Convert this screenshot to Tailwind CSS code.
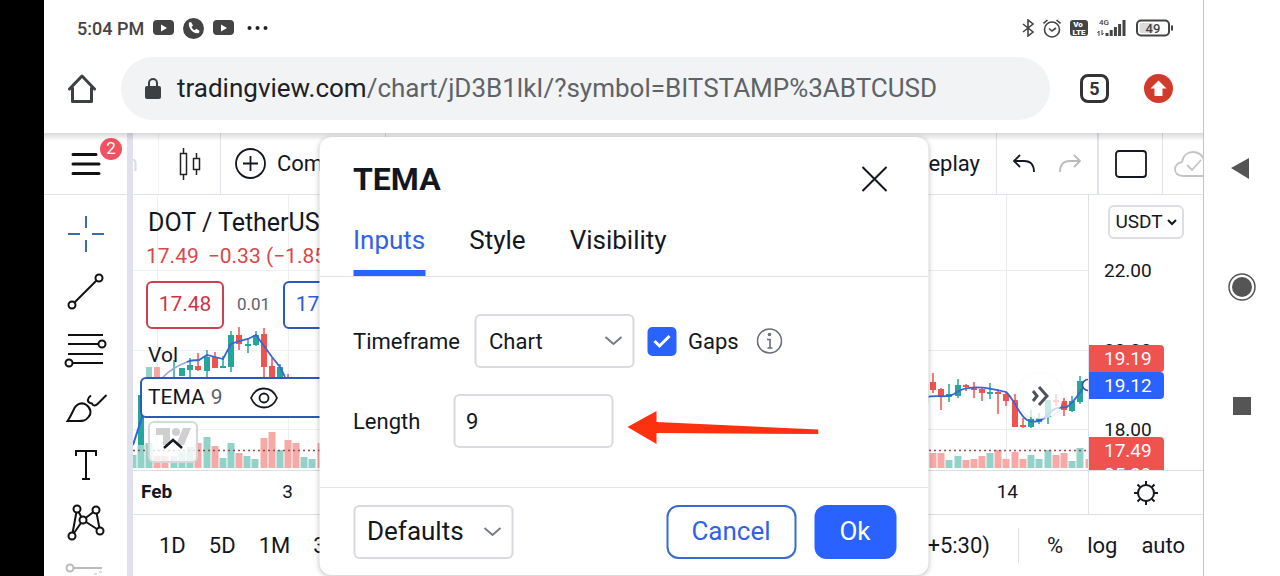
<!DOCTYPE html>
<html lang="en">
<head>
  <meta charset="UTF-8">
  <meta name="viewport" content="width=device-width, initial-scale=1.0">
  <title>TradingView</title>
  <script src="https://cdn.jsdelivr.net/npm/@tailwindcss/browser@4"></script>
</head>
<body class="bg-white text-[#131722] font-['Roboto','Liberation_Sans',sans-serif]">
<div class="flex h-screen w-full overflow-hidden">

  <!-- Camera cutout side -->
  <div class="w-11 shrink-0 bg-black"></div>

  <div class="flex flex-col flex-1 min-w-0">

    <!-- Status bar -->
    <div class="flex items-center justify-between h-14 shrink-0 pl-[33px] pr-[29px] text-[#444]">
      <div class="flex items-center gap-[9px]">
        <span class="text-[18px] font-medium">5:04 PM</span>
        <svg class="w-[21px] h-4" viewBox="0 0 21 16"><rect width="21" height="15" rx="4" fill="#444"/><path d="M8 4.500l6 3.500-6 3.500z" fill="#fff"/></svg>
        <svg class="w-[21px] h-[21px]" viewBox="0 0 21 21"><circle cx="10.500" cy="10.500" r="10.500" fill="#444"/><path d="M6 4.500l2-.5 2 3.500-1.500 1.500c.8 1.600 1.700 2.500 3.200 3.300l1.500-1.500 3.300 2-.5 2.200c-5 2-11.500-5-10-10.500z" fill="#fff"/></svg>
        <svg class="w-[21px] h-4" viewBox="0 0 21 16"><rect width="21" height="15" rx="4" fill="#444"/><path d="M8 4.500l6 3.500-6 3.500z" fill="#fff"/></svg>
        <svg class="w-6 h-4 ml-1" viewBox="0 0 24 16" fill="#222"><circle cx="2.500" cy="8" r="2"/><circle cx="10.500" cy="8" r="2"/><circle cx="18.500" cy="8" r="2"/></svg>
      </div>
      <div class="flex items-center gap-[9px]">
        <svg class="w-3 h-[18px]" viewBox="0 0 12 18" fill="none" stroke="#444" stroke-width="1.600"><path d="M1 5l10 8-5 4V1l5 4-10 8"/></svg>
        <svg class="w-[18px] h-[19px]" viewBox="0 0 18 19" fill="none" stroke="#444" stroke-width="1.600"><circle cx="9" cy="10.500" r="7.500"/><path d="M6 9.500l3 2.500 4-3M.5 4.500L4.500 1M17.500 4.500L13.500 1"/></svg>
        <svg class="w-[18px] h-[18px]" viewBox="0 0 18 18"><rect y="1" width="18" height="16" rx="3" fill="#444"/><g fill="#fff" font-size="8" font-weight="900" font-family="Roboto" text-anchor="middle"><text x="8" y="8">Vo</text><text x="9" y="15.500">LTE</text></g></svg>
        <svg class="w-[30px] h-5" viewBox="0 0 30 20"><text x="2" y="7" font-size="8" font-weight="500" font-family="Roboto" fill="#444">4G</text><path d="M2 18v-5l-1.500 2M5 12v5l1.500-2" stroke="#444" fill="none"/><path d="M10 18v-3M14.200 18v-6M18.400 18V9M22.600 18V6M27 18V2" stroke="#444" stroke-width="3"/></svg>
        <svg class="w-[38px] h-[18px]" viewBox="0 0 38 18"><rect x="1" y="1.500" width="32" height="15" rx="4" fill="none" stroke="#444" stroke-width="2"/><rect x="3.500" y="4" width="14" height="10" rx="2" fill="#dcdcdc"/><path d="M36 6.500v5" stroke="#444" stroke-width="2"/><text x="17" y="13.500" font-size="13" font-weight="500" font-family="Roboto" fill="#444" text-anchor="middle">49</text></svg>
      </div>
    </div>

    <!-- Browser bar -->
    <div class="flex items-center h-[77px] shrink-0 pl-6 pr-[30px] pb-3">
      <button class="shrink-0" aria-label="Home">
        <svg class="w-7 h-[30px]" viewBox="0 0 28 30" fill="none" stroke="#3c4043" stroke-width="3" stroke-linejoin="round" stroke-linecap="round"><path d="M1.500 15L14 2l12.500 13M4.500 14v13.500h19V14"/></svg>
      </button>
      <div class="flex items-center flex-1 min-w-0 h-[63px] ml-[25px] pl-6 rounded-full bg-[#f1f3f4]">
        <svg class="w-4 h-[22px] shrink-0" viewBox="0 0 16 22"><rect y="8" width="16" height="13" rx="2" fill="#3c4043"/><path d="M4 9V5a4 4 0 018 0v4" fill="none" stroke="#3c4043" stroke-width="2"/></svg>
        <a href="#" class="ml-4 text-[26px] whitespace-nowrap text-[#5f6368]"><span class="text-[#202124]">tradingview.com</span>/chart/jD3B1lkI/?symbol=BITSTAMP%3ABTCUSD</a>
      </div>
      <button class="flex items-center justify-center w-[29px] h-[29px] ml-[30px] border-3 border-[#333] rounded-lg text-[18px] font-bold text-[#333]">5</button>
      <button class="ml-[35px]" aria-label="Update">
        <svg class="w-[29px] h-[29px]" viewBox="0 0 29 29"><circle cx="14.500" cy="14.500" r="14.500" fill="#d23b2c"/><path d="M14.500 6.500l8 8h-4V22h-8v-7.500h-4z" fill="#fff"/></svg>
      </button>
    </div>

    <!-- Page -->
    <div class="relative flex flex-1 min-h-0 overflow-hidden">

      <!-- Drawing tools -->
      <div class="flex flex-col w-[83px] shrink-0">
        <div class="relative flex items-center justify-center h-[62px] shrink-0 border-b border-[#e0e3eb]">
          <button aria-label="Menu">
            <svg class="w-[30px] h-6" viewBox="0 0 30 24" stroke="#111" stroke-width="3" stroke-linecap="round"><path d="M2 2.500h23M2 12h26M2 21.500h26"/></svg>
          </button>
          <span class="absolute top-[5px] right-[5px] flex items-center justify-center w-[22px] h-[22px] rounded-full bg-[#ef5260] text-white text-[17px]">2</span>
        </div>
        <div class="flex flex-col items-center pt-[10px]">
          <button class="flex items-center h-[58px] shrink-0" aria-label="Cross"><svg class="w-11 h-11" viewBox="0 0 44 44" fill="none" stroke="#3d6aa8" stroke-width="2"><path d="M22 4v12M22 28v12M4 22h12M28 22h12"/></svg></button>
          <button class="flex items-center h-[58px] shrink-0" aria-label="Trend line"><svg class="w-11 h-11" viewBox="0 0 44 44" fill="none" stroke="#111" stroke-width="2"><circle cx="35" cy="8" r="3.500"/><circle cx="8" cy="35" r="3.500"/><path d="M32.500 10.500l-22 22"/></svg></button>
          <button class="flex items-center h-[58px] shrink-0" aria-label="Fib retracement"><svg class="w-11 h-11 overflow-visible" viewBox="0 0 44 44" fill="none" stroke="#111" stroke-width="2"><circle cx="38" cy="16" r="3.500"/><circle cx="5" cy="35" r="3.500"/><path d="M4 7h35M4 16h30M4 26h35M9 35h30"/></svg></button>
          <button class="flex items-center h-[58px] shrink-0" aria-label="Brush"><svg class="w-11 h-11" viewBox="0 0 44 44" fill="none" stroke="#111" stroke-width="2"><path d="M3.500 35c3-4 4.500-8 6-11 3-7 9-8 13-5 5 4 5 9 2 12-3 4-6 4-10 4zM27 9.500c-4 3-4 6-1 7.500l2 .5c1 3 4 2 5.500.5l9-9"/></svg></button>
          <button class="flex items-center h-[58px] shrink-0" aria-label="Text"><svg class="w-11 h-11" viewBox="0 0 44 44" fill="none" stroke="#111" stroke-width="2"><path d="M12 12V7h20v5M22 7v28M18 35h8"/></svg></button>
          <button class="flex items-center h-[58px] shrink-0" aria-label="Patterns"><svg class="w-11 h-11" viewBox="0 0 44 44" fill="#fff" stroke="#111" stroke-width="2"><path d="M13 7L8 34l11-16zM19 18L32 8l4 21z"/><circle cx="13" cy="7" r="3.500"/><circle cx="32" cy="8" r="3.500"/><circle cx="19" cy="18" r="3.500"/><circle cx="8" cy="34" r="3.500"/><circle cx="36" cy="29" r="3.500"/></svg></button>
          <button class="flex items-center h-[58px] shrink-0" aria-label="Forecast"><svg class="w-11 h-11" viewBox="0 0 44 44" fill="none" stroke="#bbb" stroke-width="2"><circle cx="6" cy="8" r="3.500"/><path d="M10 8h28"/><path d="M30 14h3M35 12h3" stroke="#ddd"/></svg></button>
        </div>
      </div>
      <div class="w-[6px] shrink-0 bg-[#e0e1ec]"></div>

      <div class="flex flex-col flex-1 min-w-0">

        <!-- Top toolbar -->
        <div class="flex items-stretch h-[62px] shrink-0 border-b border-[#e0e3eb] text-[22px]">
          <span class="flex items-center justify-end w-[26px] pr-5 border-r border-[#f0f1f4] text-[#ddd] overflow-hidden">n</span>
          <button class="flex items-center justify-center w-[62px] border-r border-[#e0e3eb]" aria-label="Candles">
            <svg class="w-6 h-8" viewBox="0 0 24 32" fill="none" stroke="#222" stroke-width="1.500"><path d="M2.500 5.500h6v21h-6zM5.500 0v5M5.500 27v5M15.500 10.500h6v11h-6zM18.500 5v5M18.500 22v5"/></svg>
          </button>
          <button class="flex items-center gap-[11px] w-[165px] pl-[14px] border-r border-[#e0e3eb]">
            <svg class="w-[31px] h-[31px] shrink-0" viewBox="0 0 31 31" fill="none" stroke="#131722" stroke-width="1.800"><circle cx="15.500" cy="15.500" r="14.500"/><path d="M15.500 8v15M8 15.500h15"/></svg>
            Compare
          </button>
          <button class="ml-auto pr-4">Replay</button>
          <div class="flex items-center gap-[22px] w-[101px] pl-[15px] border-l border-[#e0e3eb]">
            <button aria-label="Undo"><svg class="w-6 h-5" viewBox="0 0 24 20" fill="none" stroke="#131722" stroke-width="1.800"><path d="M8 1L2 7l6 6M2 7h10c7 0 10 4 10 11"/></svg></button>
            <button aria-label="Redo"><svg class="w-6 h-5" viewBox="0 0 24 20" fill="none" stroke="#bbb" stroke-width="1.800"><path d="M16 1l6 6-6 6M22 7H12C5 7 2 11 2 18"/></svg></button>
          </div>
          <button class="flex items-center justify-center w-[65px] border-l-2 border-[#e0e3eb]" aria-label="Layout">
            <svg class="w-8 h-7" viewBox="0 0 32 28" fill="none" stroke="#131722" stroke-width="1.800"><rect x="1" y="1" width="30" height="26" rx="3"/></svg>
          </button>
          <button class="flex items-center w-[41px] pl-[11px] border-l border-[#e0e3eb] overflow-hidden" aria-label="Save">
            <svg class="w-10 h-7 shrink-0" viewBox="0 0 40 28" fill="none" stroke="#c4c4c4" stroke-width="1.800"><path d="M9 26c-11 0-10-13-1-14C9 5 14 2 19 2c6 0 11 4 11 10 10 1 9 14-1 14zM13 15l5 5 9-10"/></svg>
          </button>
        </div>

        <!-- Chart and price scale -->
        <div class="flex flex-1 min-h-0 overflow-hidden">
          <div class="relative flex items-start justify-between flex-1 min-w-0 overflow-hidden">
            <svg class="w-[188px] h-[275px] shrink-0" viewBox="133 195 188 275" fill="none">
              <path d="M157.500 195v275M288.500 195v275M133 270.500h188M133 350.500h188M133 429.500h188" stroke="#eef0f4"/>
              <!-- volume -->
              <g stroke-width="7">
                <path d="M133 455v13M141 445v23M149 443v25M174 456v12M182 452v16M190 447v21M207 437v31M223 458v10M231 443v25M247 456v12M255 459v9M280 450v18M304 457v11M312 459v9" stroke="#93d2c9"/>
                <path d="M157 456v12M165 456v12M198 443v25M215 446v22M239 453v15M264 438v30M272 432v36M288 440v28M296 443v25M321 443v25" stroke="#f7a9a7"/>
              </g>
              <path d="M133 450.500h188" stroke="#9b4a4a" stroke-width="1.500" stroke-dasharray="2 3"/>
              <!-- candles -->
              <g stroke="#26a69a">
                <path d="M174 360v17M190 358v19M207 350v27M223 356v12M231 331v41M248 338v15M256 331v15M280 364v13" stroke-width="1.500"/>
                <path d="M141 395v50M190 365v5M207 357v14M223 366v2M231 335v32M248 344v2M256 335v10M280 367v10M182 368v8" stroke-width="6"/>
                <path d="M149 367v10" stroke-width="6" opacity=".5"/>
              </g>
              <g stroke="#ef5350">
                <path d="M198 353v18M215 352v16M239 327v23M264 328v49M272 358v19M288 374v4" stroke-width="1.500"/>
                <path d="M198 366v4M215 357v11M239 335v9M264 334v33M272 366v11" stroke-width="6"/>
                <path d="M157 367v10" stroke-width="6" opacity=".5"/>
              </g>
              <path d="M133 445l13-40" stroke="#2f62d9" stroke-width="2"/>
              <path d="M163 377c8-8 16-12 24-15" stroke="#9aa6e0" stroke-width="1.500"/>
              <path d="M187 362c4-2 8-2 12-2l8-5 8 2 8 2 8-15 8-3 9-2 8-4 8 11 8 11 8 10 5 10" stroke="#3a63d6" stroke-width="1.800"/>
            </svg>
            <svg class="w-[161px] h-[275px] shrink-0" viewBox="928 195 161 275" fill="none">
              <path d="M1007.500 195v275M928 270.500h161M928 350.500h161M928 429.500h161" stroke="#e9ebef"/>
              <!-- volume -->
              <g stroke-width="7">
                <path d="M950 460v8M959 456v12M991 453v15M1032 455v13M1040 459v9M1049 450v18M1073 461v7M1081 448v20" stroke="#93d2c9"/>
                <path d="M934 453v15M942 453v15M967 460v8M975 459v9M983 456v12M999 450v18M1007 459v9M1016 452v16M1024 459v9M1057 455v13M1065 453v15M1090 459v9" stroke="#f7a9a7"/>
              </g>
              <path d="M930 450.500h159" stroke="#9b4a4a" stroke-width="1.500" stroke-dasharray="2 3"/>
              <!-- candles -->
              <g stroke="#26a69a">
                <path d="M928.500 384v19M950 384v18M959 379v19M991 383v16M1032 410v18M1040 413v11M1049 400v24M1073 396v16M1081 376v28" stroke-width="1.500"/>
                <path d="M950 394v3M959 385v11M991 392v2M1032 419v8M1040 418v4M1049 400v17M1073 401v10M1081 381v21" stroke-width="6"/>
              </g>
              <g stroke="#ef5350">
                <path d="M934 373v20M942 388v22M967 384v7M975 382v16M983 387v14M999 389v25M1007 392v14M1016 394v33M1024 418v10M1057 394v12M1065 398v18" stroke-width="1.500"/>
                <path d="M934 382v8M942 389v7M967 385v2M975 387v3M983 389v4M999 392v2M1007 394v7M1016 400v27M1024 425v2M1057 400v2M1065 401v9" stroke-width="6"/>
              </g>
              <path d="M928 397c10-3 18 2 27-3 12-10 32-7 52-2 9 8 12 22 21 28 8 4 16 0 22-6 6-8 12-6 18-7 8-6 11-12 16-19" stroke="#3a63d6" stroke-width="1.800"/>
              <circle cx="1089" cy="385" r="5.500" fill="#fff" stroke="#2f4fa0" stroke-width="1.500"/>
            </svg>

            <!-- Legend -->
            <div class="absolute top-[11px] left-[7px] whitespace-nowrap">
              <div class="pl-2 text-[25px] leading-[34px]">DOT / TetherUS</div>
              <div class="flex gap-[9px] pl-[6px] text-[21px] leading-8 text-[#d9464c]"><span>17.49</span><span>−0.33 (−1.85%)</span></div>
              <div class="flex items-center gap-[13px] mt-[9px] pl-[6px]">
                <button class="w-[78px] h-12 border-2 border-[#cf3f4f] rounded-md bg-white text-[21px] text-[#cf3447]">17.48</button>
                <span class="text-[17px] text-[#5d606b]">0.01</span>
                <button class="w-[78px] h-12 border-2 border-[#2a5bb8] rounded-md bg-white text-[21px] text-[#2f5be0]">17.49</button>
              </div>
              <div class="mt-3 pl-2 text-[21px] leading-7">Vol</div>
              <div class="flex items-center w-[260px] h-[41px] mt-2 pl-[6px] border-2 border-[#2a5bb8] rounded-md bg-white text-[21px]">
                TEMA <span class="ml-[6px] text-[#5d606b]">9</span>
                <button class="ml-[27px]" aria-label="Hide">
                  <svg class="w-7 h-[22px]" viewBox="0 0 28 22" fill="none" stroke="#131722" stroke-width="1.800"><path d="M1 11C4 4 9 1.500 14 1.500S24 4 27 11c-3 7-8 9.500-13 9.500S4 18 1 11z"/><circle cx="14" cy="11" r="4.500"/></svg>
                </button>
              </div>
              <button class="flex items-center justify-center w-[50px] h-[42px] mt-[3px] ml-2 border-2 border-[#d5d7dc] rounded-md bg-white/80" aria-label="Collapse legend">
                <svg class="w-10 h-9" viewBox="0 0 40 36"><path d="M3 4h14v17h-7v-10H3zM30 4h8l-7 17h-8z" fill="#cfcfcf"/><circle cx="23" cy="8" r="4" fill="#cfcfcf"/><path d="M11 24l9-8 9 8" fill="none" stroke="#131722" stroke-width="2.500"/></svg>
              </button>
            </div>

            <button class="absolute top-[178px] right-[25px] flex items-center justify-center w-[46px] h-[46px] rounded-full bg-white/75 shadow-sm" aria-label="Scroll to latest">
              <svg class="w-[18px] h-5" viewBox="0 0 18 20" fill="none" stroke="#50535e" stroke-width="3"><path d="M2 5l4 5-4 5M8 1l8 9-8 9"/></svg>
            </button>
          </div>

          <!-- Price scale -->
          <div class="flex flex-col items-start w-[115px] shrink-0 pt-[10px] border-l border-[#dcdfe6] text-[19px] leading-7">
            <button class="flex items-center justify-center gap-1 w-[76px] h-[34px] shrink-0 ml-[19px] border-2 border-[#dcdee3] rounded-md">USDT
              <svg class="w-[10px] h-2" viewBox="0 0 10 8" fill="none" stroke="#131722" stroke-width="2"><path d="M1 2l4 4 4-4"/></svg>
            </button>
            <span class="mt-[18px] pl-[15px]">22.00</span>
            <span class="mt-[52px] pl-[15px]">20.00</span>
            <span class="relative -mt-5 w-[75px] h-[27px] shrink-0 pl-[15px] bg-[#ef5350] text-white rounded-r-sm">19.19</span>
            <span class="w-[75px] h-[27px] shrink-0 pl-[15px] bg-[#2962ff] text-white rounded-r-sm">19.12</span>
            <span class="mt-[17px] pl-[15px]">18.00</span>
            <span class="relative -mt-[7px] w-[75px] shrink-0 pl-[15px] bg-[#ef5350] text-white rounded-r-sm leading-6 pt-[2px]">17.49<br>05:29</span>
          </div>
        </div>

        <!-- Time scale -->
        <div class="flex h-[45px] shrink-0 border-y border-[#dcdfe6] text-[19px]">
          <div class="flex items-center justify-between flex-1 pl-2 pr-[70px]">
            <div class="flex items-center gap-[110px]"><span class="font-bold">Feb</span><span>3</span></div>
            <span>14</span>
          </div>
          <button class="flex items-center justify-center w-[115px] border-l border-[#dcdfe6]" aria-label="Settings">
            <svg class="w-6 h-6" viewBox="0 0 24 24" fill="none" stroke="#131722" stroke-width="2"><circle cx="12" cy="12" r="8"/><path d="M12 0v4M12 20v4M0 12h4M20 12h4M3.500 3.500L6 6M18 18l2.500 2.500M3.500 20.500L6 18M18 6l2.500-2.500"/></svg>
          </button>
        </div>

        <!-- Bottom toolbar -->
        <div class="flex items-center justify-between h-[61px] shrink-0 pl-[26px] pr-[18px] text-[22px]">
          <div class="flex gap-[23px]">
            <button>1D</button>
            <button>5D</button>
            <button>1M</button>
            <button>3M</button>
          </div>
          <div class="flex items-center gap-6">
            <button>(UTC+5:30)</button>
            <span class="w-px h-[35px] mx-1 bg-[#dcdfe6]"></span>
            <button>%</button>
            <button>log</button>
            <button>auto</button>
          </div>
        </div>
      </div>

      <!-- Shadow under the browser bar -->
      <div class="absolute inset-x-0 top-0 h-2 bg-linear-to-b from-black/15 to-transparent"></div>

      <!-- Indicator dialog -->
      <div class="absolute top-1 left-1/2 -translate-x-1/2 w-[609px] rounded-xl bg-white shadow-[0_1px_5px_rgba(0,0,0,0.25)]" role="dialog" aria-labelledby="dialog-title">
        <div class="flex items-center justify-between pt-[22px] pl-[34px] pr-10">
          <h2 id="dialog-title" class="text-[32px] leading-10 font-bold">TEMA</h2>
          <button aria-label="Close">
            <svg class="w-7 h-7" viewBox="0 0 28 28" fill="none" stroke="#131722" stroke-width="2"><path d="M2 2l24 24M26 2L2 26"/></svg>
          </button>
        </div>
        <div class="flex gap-11 pl-[34px] pr-8 border-b border-[#e0e3eb] text-[26px] leading-[30px]">
          <button class="pt-[26px] pb-[15px] border-b-6 border-[#2962ff] text-[#2f62e8]">Inputs</button>
          <button class="pt-[26px] pb-[15px] border-b-6 border-transparent">Style</button>
          <button class="pt-[26px] pb-[15px] border-b-6 border-transparent">Visibility</button>
        </div>

        <div class="flex flex-col gap-[26px] pl-[34px] pr-8 pt-[37px] pb-[39px] text-[22px]">
          <div class="flex items-center">
            <label for="timeframe">Timeframe</label>
            <div class="relative ml-[14px]">
              <select id="timeframe" class="appearance-none w-40 h-[54px] pl-[13px] border-2 border-[#d8dadf] rounded-md bg-white">
                <option>Chart</option>
              </select>
              <svg class="absolute top-[22px] right-3 w-[18px] h-[10px] pointer-events-none" viewBox="0 0 18 10" fill="none" stroke="#787b86" stroke-width="2"><path d="M1 1l8 7 8-7"/></svg>
            </div>
            <label class="flex items-center gap-3 ml-[13px]">
              <span class="relative w-[29px] h-[29px]">
                <input type="checkbox" checked class="block appearance-none w-[29px] h-[29px] rounded-[5px] checked:bg-[#2962ff]">
                <svg class="absolute inset-0 pointer-events-none" viewBox="0 0 29 29" fill="none" stroke="#fff" stroke-width="3"><path d="M7 14l5 5 10-10"/></svg>
              </span>
              Gaps
            </label>
            <svg class="w-[26px] h-[26px] ml-[18px]" viewBox="0 0 26 26" fill="none" stroke="#6a6d78" stroke-width="1.600"><circle cx="13" cy="13" r="12"/><path d="M10.500 11.500h3V20M11 20h5"/><circle cx="13" cy="6.500" r="1"/></svg>
          </div>
          <div class="flex items-center">
            <label for="length" class="w-[100px]">Length</label>
            <input id="length" type="text" value="9" class="w-40 h-[54px] pl-[11px] border-2 border-[#d8dadf] rounded-md">
            <svg class="w-48 h-[54px] ml-[13px]" viewBox="0 0 192 54"><path d="M1 33l29-16v11l162 7.500v4.500L30 39v11z" fill="#fb3110"/></svg>
          </div>
        </div>

        <div class="flex items-center h-[88px] pl-[34px] pr-8 border-t border-[#e0e3eb] text-[26px]">
          <div class="relative">
            <select aria-label="Defaults" class="appearance-none w-40 h-[54px] pl-3 border-2 border-[#d8dadf] rounded-md bg-white">
              <option>Defaults</option>
            </select>
            <svg class="absolute top-[22px] right-3 w-[18px] h-[10px] pointer-events-none" viewBox="0 0 18 10" fill="none" stroke="#787b86" stroke-width="2"><path d="M1 1l8 7 8-7"/></svg>
          </div>
          <button class="w-[130px] h-[54px] ml-auto border-2 border-[#3a6ad0] rounded-xl text-[#2f62e8]">Cancel</button>
          <button class="w-[82px] h-[54px] ml-[18px] rounded-xl bg-[#2962ff] text-white">Ok</button>
        </div>
      </div>
    </div>
  </div>

  <!-- Android navigation -->
  <div class="flex flex-col items-center justify-center gap-[87px] w-[77px] shrink-0 border-l border-[#c4c4c4]">
    <button aria-label="Back"><svg class="w-8 h-8" viewBox="0 0 32 32"><path d="M5 15L23 5v21z" fill="#555"/></svg></button>
    <button aria-label="Home screen"><svg class="w-8 h-8" viewBox="0 0 32 32"><circle cx="16" cy="15" r="13" fill="none" stroke="#555" stroke-width="1.500"/><circle cx="16" cy="15" r="10" fill="#555"/></svg></button>
    <button aria-label="Recent apps"><svg class="w-8 h-8" viewBox="0 0 32 32"><path d="M7 6h18v18H7z" fill="#555"/></svg></button>
  </div>
</div>
</body>
</html>
